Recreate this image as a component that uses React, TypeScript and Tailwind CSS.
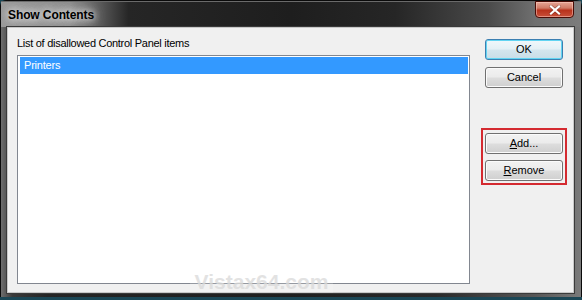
import React from "react";

const btnBase =
  "w-[78px] h-[21px] rounded-[3px] border flex items-center justify-center text-[11px] leading-none text-black";
const btnNormal =
  "border-[#707070] bg-[linear-gradient(to_bottom,#f2f2f2_0%,#ebebeb_48%,#dddddd_52%,#cfcfcf_100%)] shadow-[inset_0_0_0_1px_#fbfbfb]";
const btnDefault =
  "border-[#3c7fb1] bg-[linear-gradient(to_bottom,#f0f8fb_0%,#e4f0f5_48%,#d4e6ee_52%,#c8dde7_100%)] shadow-[inset_0_0_0_1px_#62d4f2]";

export default function App() {
  return (
    <div
      className="w-[582px] h-[300px] bg-[#1b4756] overflow-hidden relative"
      style={{ fontFamily: '"Liberation Sans", Arial, sans-serif' }}
    >
      <div className="h-[297px] flex flex-col rounded-t-[6px] border-t border-x border-[#0a0a0a] bg-[linear-gradient(to_right,#6e6e6e_0%,#3a3a3a_2%,#252525_8%,#1f1f1f_50%,#2a2a2a_75%,#565656_92%,#7a7a7a_100%)]">
        {/* Title bar */}
        <div className="h-[26px] flex items-start shrink-0 border-t border-[#6a6a6a] bg-[linear-gradient(to_right,#9a9a9a_0%,#8c8c8c_12%,#5a5a5a_17%,#262626_22%,#1e1e1e_50%,#262626_68%,#4a4a4a_84%,#6f6f6f_92%,#7c7c7c_100%)]">
          <div
            className="pl-[7px] pt-[4px] text-[12px] font-bold text-black tracking-[-0.1px]"
            style={{ textShadow: "0 0 6px #e8e8e8, 0 0 10px #d0d0d0, 0 0 14px #c0c0c0" }}
          >
            Show Contents
          </div>
          <div className="ml-auto mr-[7px] -mt-px w-[39px] h-[17px] rounded-b-[4px] border border-[#4a0c06] bg-[linear-gradient(to_bottom,#e6a595_0%,#d07a66_40%,#b8321c_55%,#c8503a_100%)] shadow-[inset_0_0_0_1px_rgba(255,210,200,0.5)] flex items-center justify-center">
            <svg width="12" height="10" viewBox="0 0 12 10">
              <path
                d="M2 1.5 L10 8.5 M10 1.5 L2 8.5"
                stroke="#3a0a04"
                strokeWidth="3.4"
                strokeLinecap="square"
                opacity="0.35"
              />
              <path
                d="M2 1.5 L10 8.5 M10 1.5 L2 8.5"
                stroke="#ffffff"
                strokeWidth="2.2"
                strokeLinecap="square"
              />
            </svg>
          </div>
        </div>
        {/* Client area */}
        <div className="flex-1 flex pl-[6px] pr-[7px]">
          <div className="flex-1 flex bg-[#f0f0f0] border border-[#c8c8c8] shadow-[0_0_0_1px_#3a3a3a]">
            <div className="flex flex-col pl-[9px] pt-[9px]">
              <div className="h-[18px] text-[11px] leading-[13px] text-black tracking-[-0.28px]">
                List of disallowed Control Panel items
              </div>
              <div className="w-[453px] h-[229px] border border-[#828790] bg-white">
                <div className="ml-[2px] mr-[1px] mt-[1px] h-[17px] bg-[#3399ff] text-white text-[11px] leading-[17px] pl-[4px] tracking-[-0.2px]">
                  Printers
                </div>
              </div>
            </div>
            <div className="flex flex-col pl-[15px] pt-[11px]">
              <div className={`${btnBase} ${btnDefault}`}>OK</div>
              <div className={`${btnBase} ${btnNormal} mt-[7px]`}>Cancel</div>
              <div className="mt-[40px] -ml-[4px] w-[86px] border-2 border-[#d42a30] px-[2px] pt-[3px] pb-[2px] flex flex-col gap-[6px]">
                <div className={`${btnBase} ${btnNormal}`}>
                  <span>
                    <span className="underline">A</span>dd...
                  </span>
                </div>
                <div className={`${btnBase} ${btnNormal}`}>
                  <span>
                    <span className="underline">R</span>emove
                  </span>
                </div>
              </div>
            </div>
          </div>
        </div>
        <div className="h-[4px] shrink-0" />
      </div>
      {/* watermark */}
      <div
        className="absolute left-[190px] top-[270px] w-[143px] h-[23px] flex items-center justify-center text-[21px] font-bold text-[#dcdcdc] bg-[rgba(255,255,255,0.2)]"
        style={{ opacity: 0.8 }}
      >
        Vistax64.com
      </div>
    </div>
  );
}
